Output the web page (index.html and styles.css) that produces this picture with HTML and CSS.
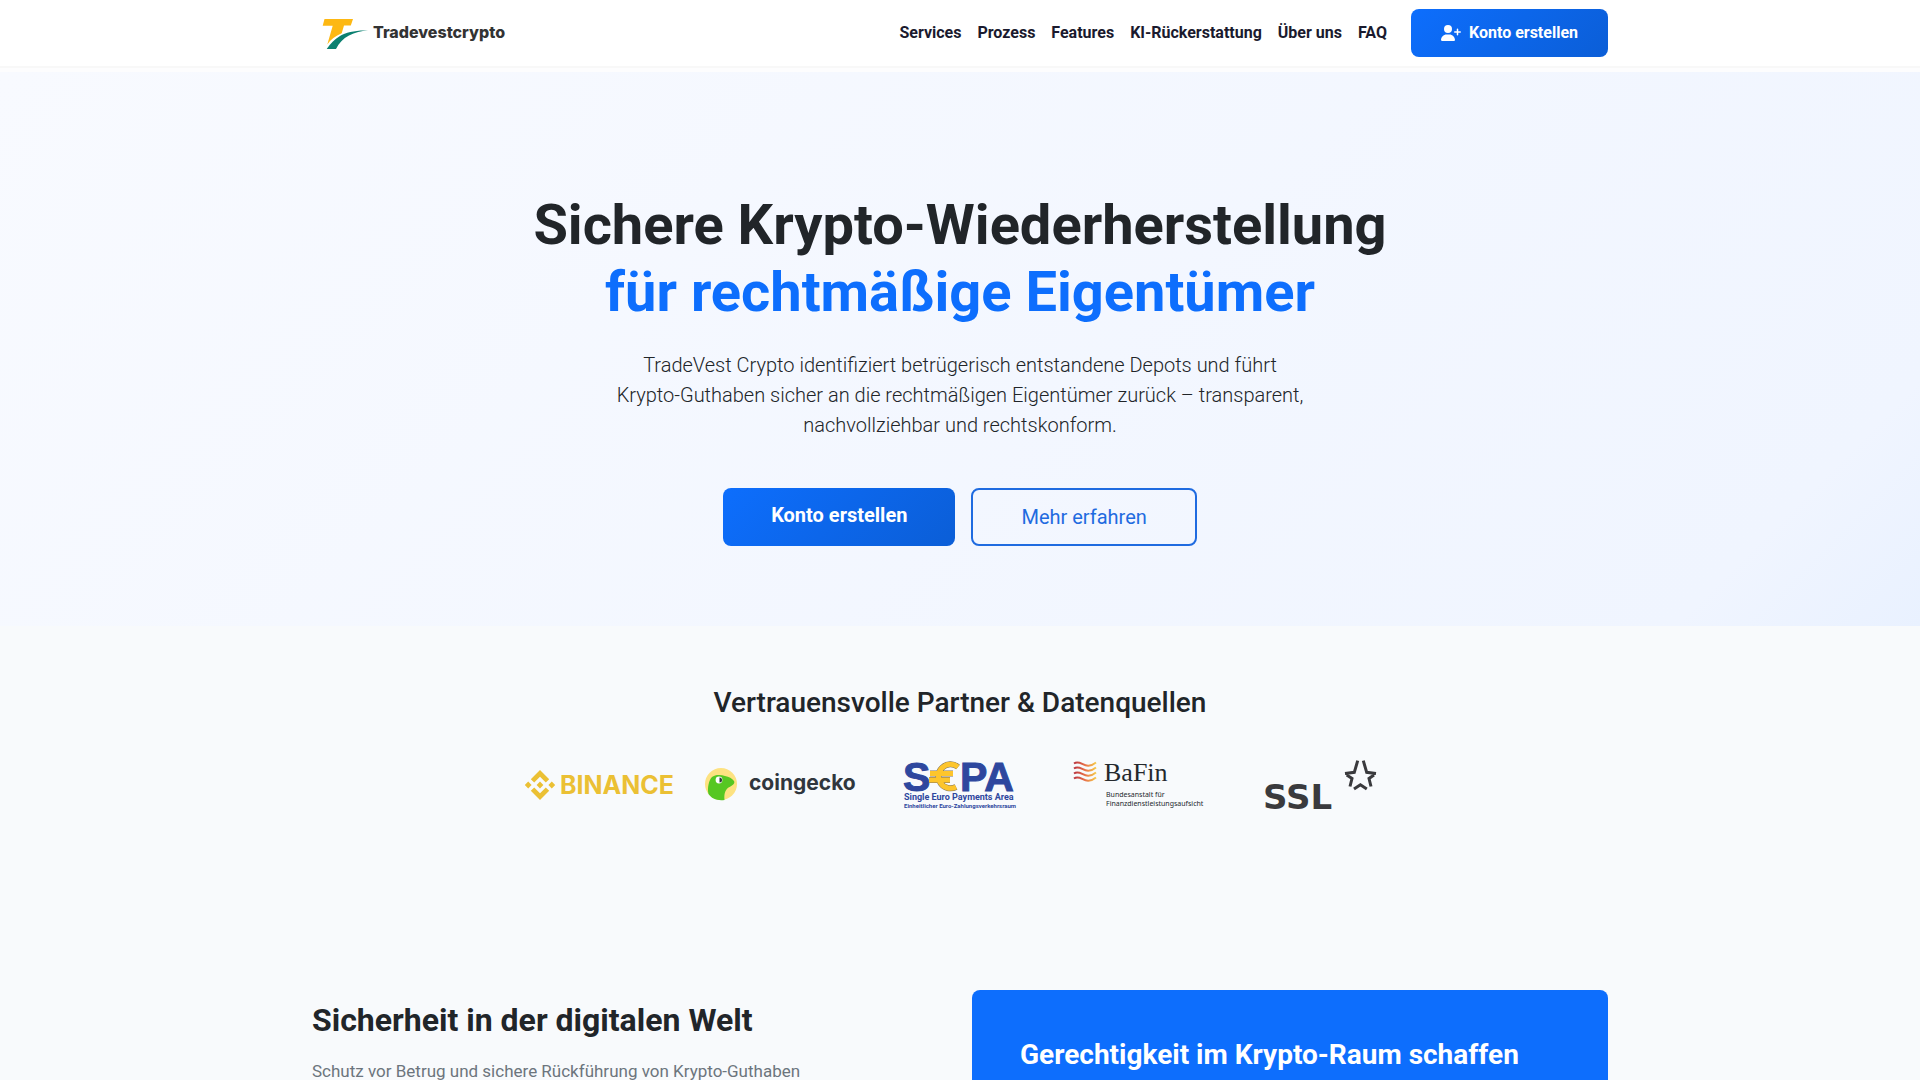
FILE: index.html
```html
<!DOCTYPE html>
<html lang="de">
  <head>
    <meta charset="UTF-8" />
    <meta name="viewport" content="width=device-width, initial-scale=1.0" />
    <title>Tradevestcrypto</title>
    <link rel="stylesheet" href="styles.css">
  </head>
  <body>
    <header class="navbar">
      <div class="container navbar-inner">
        <a class="brand" href="#" aria-label="Tradevestcrypto">
          <svg width="200" height="50" viewBox="0 0 200 50">
            <path fill="#fdb813" d="M12.5 11H41l-2.2 6.6H32l-2.3 7.6C23.500 28 18.500 31.500 15.300 36.500L20.700 17.700h-10z" />
            <path fill="#0b8070" d="M56 22.600C44 22 34 24.500 28 28c-5 3-9.500 7.500-13.300 13H24c3-6 7-10.500 13-13.500 6-3 12-4.500 19-4.900z" />
            <text class="brand-text" x="61" y="30">Tradevestcrypto</text>
          </svg>
        </a>
        <nav class="nav-links">
          <a href="#services">Services</a>
          <a href="#prozess">Prozess</a>
          <a href="#features">Features</a>
          <a href="#ki">KI-Rückerstattung</a>
          <a href="#ueber-uns">Über uns</a>
          <a href="#faq">FAQ</a>
          <a class="btn btn-primary btn-nav" href="#register">
            <svg width="20" height="16" viewBox="0 0 640 512" fill="currentColor" aria-hidden="true">
              <path d="M96 128a128 128 0 1 1 256 0A128 128 0 1 1 96 128zM0 482.300C0 383.800 79.800 304 178.300 304h91.400C368.200 304 448 383.800 448 482.300c0 16.400-13.300 29.700-29.700 29.700H29.700C13.300 512 0 498.700 0 482.300zM504 312V248H440c-13.300 0-24-10.700-24-24s10.700-24 24-24h64V136c0-13.300 10.700-24 24-24s24 10.700 24 24v64h64c13.300 0 24 10.700 24 24s-10.700 24-24 24H552v64c0 13.300-10.700 24-24 24s-24-10.700-24-24z" />
            </svg>
            Konto erstellen
          </a>
        </nav>
      </div>
    </header>

    <section class="hero">
      <h1>
        Sichere Krypto-Wiederherstellung<br />
        <span class="highlight">für rechtmäßige Eigentümer</span>
      </h1>
      <p class="lead">
        TradeVest Crypto identifiziert betrügerisch entstandene Depots und führt<br />
        Krypto-Guthaben sicher an die rechtmäßigen Eigentümer zurück – transparent,<br />
        nachvollziehbar und rechtskonform.
      </p>
      <div class="hero-buttons">
        <a class="btn btn-primary btn-lg" href="#register">Konto erstellen</a>
        <a class="btn btn-outline btn-lg" href="#services">Mehr erfahren</a>
      </div>
    </section>

    <section class="partners">
      <h2>Vertrauensvolle Partner &amp; Datenquellen</h2>
      <div class="partner-logos">
        <svg class="binance" width="150" height="50" viewBox="0 0 150 50">
          <path d="M15 10l9.200 9.200-3.400 3.400-5.800-5.800-5.800 5.800-3.400-3.400zM3.200 21.600L6.600 25l-3.400 3.400L-.2 25zM15 21.600l3.400 3.400-3.400 3.400-3.400-3.400zM26.800 21.600l3.400 3.400-3.400 3.400-3.400-3.400zM9.200 27.400l5.800 5.800 5.800-5.800 3.400 3.400L15 40l-9.200-9.200z" />
          <text x="35" y="34">BINANCE</text>
        </svg>
        <svg class="coingecko" width="150" height="50" viewBox="0 0 150 50">
          <circle cx="16" cy="24" r="16" fill="#fde281" />
          <path fill="#56c722" d="M3.500 34C2 28 4 20 7 17c3-2.600 9-2.500 13-1 4 .5 7 2.500 9 5 1.500 3-2.500 5-5.500 6.500C20 30 19 34 19.500 40 12 41 6.500 38.500 3.500 34z" />
          <circle cx="14" cy="20" r="3.400" fill="#fff" />
          <path fill="#30363d" d="M14.500 17.500a2.500 2.500 0 0 1 0 5z" />
          <text x="44" y="30">coingecko</text>
        </svg>
        <svg class="sepa" width="150" height="50" viewBox="0 0 150 50">
          <text class="sepa-big" x="18" y="31">S</text>
          <text class="sepa-big" x="75" y="31">PA</text>
          <path class="sepa-euro" d="M73 7A12 12 0 1 0 71 27M45 13.500h23M44 20h21" />
          <path class="sepa-euro-fill" d="M73 7A12 12 0 1 0 71 27M45 13.500h23M44 20h21" />
          <text class="sepa-line" x="19" y="40">Single Euro Payments Area</text>
          <text class="sepa-small" x="19" y="48">Einheitlicher Euro-Zahlungsverkehrsraum</text>
        </svg>
        <svg class="bafin" width="150" height="50" viewBox="0 0 150 50">
          <defs>
            <linearGradient id="flame" x1="0" x2="1">
              <stop offset="0" stop-color="#b9343f" />
              <stop offset=".5" stop-color="#e8714a" />
              <stop offset="1" stop-color="#f5cb4c" />
            </linearGradient>
          </defs>
          <path class="waves" stroke="url(#flame)" d="M9 3.500c7-5 11 8 22-1M9 8.500c7-5 11 8 22-1M9 13.500c7-5 11 8 22-1M9 18.500c7-5 11 8 22-1" />
          <text class="bafin-name" x="39" y="21">BaFin</text>
          <text class="bafin-sub" x="41" y="37">Bundesanstalt für</text>
          <text class="bafin-sub" x="41" y="46">Finanzdienstleistungsaufsicht</text>
        </svg>
        <svg class="ssl" width="150" height="50" viewBox="0 0 150 50">
          <text x="18" y="49">SSL</text>
          <path d="M112.700 .7l-3.400 11.600-9.300 1.200M118.300 .7l3.400 11.600 9.300 1.200M101.700 15l5.300 3.500-2 8M129 15l-5 3.500 2 8M109 29l6.400-4.300 6.400 4.300" />
        </svg>
      </div>
    </section>

    <section class="container security">
      <div class="security-text">
        <h2>Sicherheit in der digitalen Welt</h2>
        <p>Schutz vor Betrug und sichere Rückführung von Krypto-Guthaben</p>
      </div>
      <div class="security-card">
        <h3>Gerechtigkeit im Krypto-Raum schaffen</h3>
      </div>
    </section>
  </body>
</html>
```
FILE: styles.css
```css
* {
  box-sizing: border-box;
}

body {
  margin: 0;
  font-family: Roboto, sans-serif;
  font-size: 16px;
  line-height: 24px;
  color: #212529;
  background-color: #f8fafc;
}

h1,
h2,
h3,
p {
  margin: 0;
}

a {
  text-decoration: none;
}

.container {
  max-width: 1320px;
  margin: 0 auto;
  padding: 0 12px;
}

.navbar {
  margin-bottom: 4px;
  background-color: #fff;
  border-bottom: 2px solid #f8f8f8;
  box-shadow: 0 4px 0 #fdfdfe;
}

.navbar-inner {
  display: flex;
  align-items: center;
  justify-content: space-between;
  min-height: 66px;
}

.brand {
  display: flex;
}

.brand-text {
  font-family: Inter, sans-serif;
  font-size: 16px;
  font-weight: 800;
  fill: #333;
}

.nav-links {
  display: flex;
  align-items: center;
  gap: 16px;
}

.nav-links a {
  color: #1a1a2e;
  font-weight: 700;
}

.btn {
  display: inline-flex;
  justify-content: center;
  border-radius: 8px;
}

.btn-primary,
.nav-links .btn-primary {
  color: #fff;
  font-weight: 700;
  background: linear-gradient(135deg, #0d6efd, #0b5ed7);
}

.btn-nav {
  align-items: center;
  gap: 8px;
  margin-left: 8px;
  padding: 12px 30px;
}

.btn-lg {
  font-size: 20px;
  line-height: 30px;
  padding: 12px 48px;
}

.btn-outline {
  color: #1f6be0;
  border: 2px solid #1f6be0;
}

.hero {
  padding: 120px 12px 80px;
  text-align: center;
  background: linear-gradient(135deg, #f8faff 0%, #f0f5ff 90%, #e9f1ff 100%);
}

.hero h1 {
  font-size: 56px;
  font-weight: 700;
  line-height: 67px;
  margin-bottom: 24px;
}

.highlight {
  color: #0d6efd;
}

.lead {
  font-size: 20px;
  font-weight: 300;
  line-height: 30px;
  margin-bottom: 48px;
}

.hero-buttons {
  display: flex;
  justify-content: center;
  gap: 16px;
}

.partners {
  padding: 60px 12px 180px;
  text-align: center;
}

.partners h2 {
  font-size: 28px;
  font-weight: 500;
  line-height: 34px;
  margin-bottom: 40px;
}

.partner-logos {
  display: flex;
  flex-wrap: wrap;
  justify-content: center;
  gap: 30px;
}

.partner-logos svg {
  overflow: visible;
}

.binance {
  fill: #ebc034;
  font-family: Inter, sans-serif;
  font-size: 25px;
  font-weight: 700;
}

.coingecko {
  fill: #30363d;
  font-family: Inter, sans-serif;
  font-size: 21px;
  font-weight: 700;
}

.sepa {
  fill: #2e479e;
  font-family: Roboto, sans-serif;
  font-weight: 700;
}

.sepa-big {
  font-family: "Liberation Sans", sans-serif;
  font-size: 41px;
  stroke: #2e479e;
}

.sepa-line {
  font-size: 9px;
}

.sepa-small {
  font-size: 6px;
}

.sepa-euro {
  fill: none;
  stroke: #7c7160;
  stroke-width: 6;
}

.sepa-euro-fill {
  fill: none;
  stroke: #fdc52c;
  stroke-width: 5;
}

.bafin {
  fill: #24282c;
}

.waves {
  fill: none;
  stroke-width: 2;
}

.bafin-name {
  font-family: "Liberation Serif", serif;
  font-size: 26px;
}

.bafin-sub {
  font-family: "Noto Sans", sans-serif;
  font-size: 7px;
}

.ssl {
  fill: #3a3a3d;
  font-family: "DejaVu Sans", sans-serif;
  font-size: 34px;
  font-weight: 700;
}

.ssl path {
  fill: none;
  stroke: #3a3a3d;
  stroke-width: 3;
}

.security {
  display: grid;
  grid-template-columns: 1fr 1fr;
  gap: 24px;
}

.security-text {
  padding-top: 11px;
}

.security-text h2 {
  font-size: 32px;
  font-weight: 700;
  line-height: 38px;
  margin-bottom: 20px;
}

.security-text p {
  font-size: 17px;
  color: #6c757d;
}

.security-card {
  padding: 48px;
  color: #fff;
  background-color: #0d6efd;
  border-radius: 8px;
}

.security-card h3 {
  font-size: 28px;
  font-weight: 700;
  line-height: 34px;
}
```
